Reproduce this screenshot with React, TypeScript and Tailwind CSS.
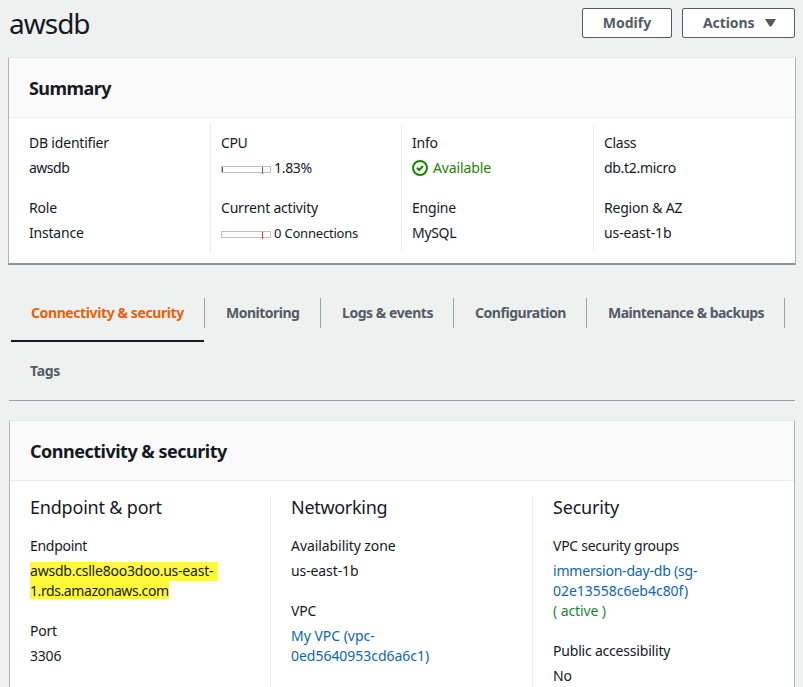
import React from "react";

type FieldProps = { label: React.ReactNode; children: React.ReactNode };

function Field({ label, children }: FieldProps) {
  return (
    <div className="mb-5">
      <div className="mb-[5px] h-5 whitespace-nowrap">{label}</div>
      <div className="whitespace-nowrap">{children}</div>
    </div>
  );
}

function Meter({ used }: { used?: boolean }) {
  return (
    <svg width="50" height="8" viewBox="0 0 50 8" className="mt-1 mr-[3px] shrink-0" shapeRendering="crispEdges">
      <rect x="0.5" y="0.5" width="49" height="6" fill="#fff" stroke="#c0c0c0" />
      {used && <rect x="1" y="1" width="1" height="5" fill="#3b5f8a" />}
      <rect x="41" y="1" width="1" height="7" fill="#d13b3b" />
    </svg>
  );
}

function Divider() {
  return <div className="h-[30px] w-px shrink-0 bg-[#95a5a6]" />;
}

export default function App() {
  return (
    <div className="h-[687px] w-[803px] overflow-hidden bg-[#eff1f1] font-['Noto_Sans',sans-serif] text-[14px] leading-5 tracking-[-0.2px] text-[#16191f]">
      <header className="flex h-[57px] items-start pt-2 pr-2 pl-[9px]">
        <h1 className="-mt-[3px] flex-1 text-[28px] leading-9 tracking-[-1px]">awsdb</h1>
        <div className="flex gap-[10px] font-bold tracking-[0.05px] text-[#545b64]">
          <button className="h-[30px] w-[90px] rounded-xs border border-[#545b64] bg-white">Modify</button>
          <button className="flex h-[30px] w-[113px] items-center rounded-xs border border-[#545b64] bg-white pl-5">
            <span className="tracking-[-0.1px]">Actions</span>
            <svg width="11" height="8" viewBox="0 0 11 8" className="ml-[11px]">
              <path d="M0 0h11L6.3 7.5H4.7z" fill="#545b64" />
            </svg>
          </button>
        </div>
      </header>

      <section className="ml-2 h-[208px] w-[788px] border-x border-t border-b-2 border-x-[#aab7b8] border-t-[#e4e7e7] border-b-[#879596] bg-white">
        <h2 className="h-[60px] border-b border-[#eaeded] bg-[#fafafa] pt-[18px] pl-5 text-[18px] leading-[25px] font-bold tracking-[-0.55px]">
          Summary
        </h2>
        <div className="mt-[5px] grid h-[130px] grid-cols-[202px_191px_192px_201px] grid-rows-[130px]">
          <div className="border-r border-[#eaeded] pt-[10px] pl-5">
            <Field label="DB identifier"><span className="tracking-[-0.5px]">awsdb</span></Field>
            <Field label="Role">Instance</Field>
          </div>
          <div className="border-r border-[#eaeded] pt-[10px] pl-[10px]">
            <Field label={<span className="tracking-[-0.4px]">CPU</span>}>
              <span className="flex items-center"><Meter used /><span className="tracking-[-0.3px]">1.83%</span></span>
            </Field>
            <Field label="Current activity">
              <span className="flex items-center"><Meter /><span className="text-[13px]">0 Connections</span></span>
            </Field>
          </div>
          <div className="border-r border-[#eaeded] pt-[10px] pl-[10px]">
            <Field label="Info">
              <span className="flex items-center tracking-[-0.13px] text-[#1d8102]">
                <svg width="16" height="16" viewBox="0 0 16 16" fill="none" stroke="#1d8102" strokeWidth="2" className="mr-[5px]">
                  <circle cx="8" cy="8" r="7" />
                  <path d="M5 7.8l2.2 2.2 3.8-4" />
                </svg>
                Available
              </span>
            </Field>
            <Field label="Engine"><span className="tracking-[-0.3px]">MySQL</span></Field>
          </div>
          <div className="pt-[10px] pl-[10px]">
            <Field label={<span className="tracking-[-0.3px]">Class</span>}><span className="tracking-[-0.3px]">db.t2.micro</span></Field>
            <Field label="Region & AZ"><span className="tracking-[-0.1px]">us-east-1b</span></Field>
          </div>
        </div>
      </section>

      <nav className="mt-[33px] ml-[9px] h-[103px] w-[786px] border-b border-[#95a5a6] font-bold tracking-[-0.45px] text-[#545b64]">
        <div className="flex h-[44px] whitespace-nowrap">
          <div className="ml-[2px] h-[44px] w-[193px] border-b-2 border-[#16191f] pt-[5px] pl-5 tracking-[-0.4px] text-[#eb5f07]">Connectivity &amp; security</div>
          <Divider />
          <div className="w-[115px] pt-[5px] pl-[21px] tracking-[-0.5px]">Monitoring</div>
          <Divider />
          <div className="w-[132px] pt-[5px] pl-[21px]">Logs &amp; events</div>
          <Divider />
          <div className="w-[132px] pt-[5px] pl-[21px]">Configuration</div>
          <Divider />
          <div className="w-[197px] pt-[5px] pl-[21px] tracking-[-0.54px]">Maintenance &amp; backups</div>
          <Divider />
        </div>
        <div className="pt-[19px] pl-[21px] tracking-[-0.3px]">Tags</div>
      </nav>

      <section className="mt-[19px] ml-[9px] h-[300px] w-[786px] border-x border-t border-x-[#aab7b8] border-t-[#e4e7e7] bg-white">
        <h2 className="h-[60px] border-b border-[#eaeded] bg-[#fafafa] pt-[18px] pl-5 text-[18px] leading-[25px] font-bold tracking-[-0.5px]">
          Connectivity &amp; security
        </h2>
        <div className="mt-[15px] grid h-[220px] grid-cols-[261px_262px_261px]">
          <div className="border-r border-[#eaeded] pl-5">
            <h3 className="mb-[18px] text-[18px] leading-[22px]">Endpoint &amp; port</h3>
            <Field label={<span className="tracking-[-0.3px]">Endpoint</span>}>
              <span className="flex flex-col items-start">
                <span className="mt-px h-[19px] w-[188px] bg-[#fffa37] leading-[18px] tracking-[-0.22px]">awsdb.cslle8oo3doo.us-east-</span>
                <span className="mb-[2px] h-[18px] w-[139px] bg-[#fffa37] leading-5 tracking-[-0.41px]">1.rds.amazonaws.com</span>
              </span>
            </Field>
            <Field label="Port">3306</Field>
          </div>
          <div className="border-r border-[#eaeded] pl-5">
            <h3 className="mb-[18px] text-[18px] leading-[22px] tracking-[-0.3px]">Networking</h3>
            <Field label={<span className="tracking-[-0.07px]">Availability zone</span>}><span className="tracking-[-0.1px]">us-east-1b</span></Field>
            <Field label="VPC">
              <a className="tracking-[-0.03px] text-[#0c66b0]">My VPC (vpc-<br />0ed5640953cd6a6c1)</a>
            </Field>
          </div>
          <div className="pl-5">
            <h3 className="mb-[18px] text-[18px] leading-[22px]">Security</h3>
            <Field label={<span className="tracking-[-0.27px]">VPC security groups</span>}>
              <a className="text-[#0c66b0]">immersion-day-db (sg-<br /><span className="tracking-[-0.02px]">02e13558c6eb4c80f)</span></a>
              <div className="tracking-[-0.1px] text-[#12882f]">( active )</div>
            </Field>
            <Field label="Public accessibility">No</Field>
          </div>
        </div>
      </section>
    </div>
  );
}
